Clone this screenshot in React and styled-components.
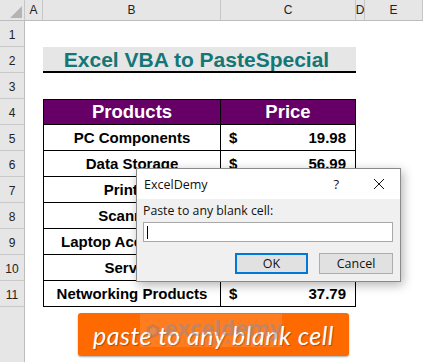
import React from 'react'
import styled, { createGlobalStyle } from 'styled-components'

const GlobalStyle = createGlobalStyle`
    html, body {
        margin: 0;
        padding: 0;
        background: #ffffff;
    }
    * {
        box-sizing: border-box;
    }
`;

const PRODUCTS = [
    { name: 'PC Components', price: '19.98' },
    { name: 'Data Storage', price: '56.99' },
    { name: 'Printers', price: '120.50' },
    { name: 'Scanners', price: '89.99' },
    { name: 'Laptop Accessories', price: '25.49' },
    { name: 'Servers', price: '899.00' },
    { name: 'Networking Products', price: '37.79' },
];

const COLUMNS = ['A', 'B', 'C', 'D', 'E'];

export default function App() {
    return (
        <>
            <GlobalStyle />
            <Sheet>
                <Corner>
                    <svg width="12" height="12" viewBox="0 0 12 12">
                        <polygon points="12,0 12,12 0,12" fill="#b4b4b4" />
                    </svg>
                </Corner>
                {COLUMNS.map((c) => (
                    <ColHead key={c}>{c}</ColHead>
                ))}

                {Array.from({ length: 11 }, (_, i) => (
                    <RowHead key={i} style={{ gridRow: i + 2 }}>{i + 1}</RowHead>
                ))}
                <RowHead $last style={{ gridRow: 13 }} />

                <Title>Excel VBA to PasteSpecial</Title>

                <HeadCell $col={3} $first>Products</HeadCell>
                <HeadCell $col={4}>Price</HeadCell>

                {PRODUCTS.map((p, i) => (
                    <React.Fragment key={p.name}>
                        <NameCell style={{ gridRow: i + 6 }}>{p.name}</NameCell>
                        <PriceCell style={{ gridRow: i + 6 }}>
                            <span>$</span>
                            <span>{p.price}</span>
                        </PriceCell>
                    </React.Fragment>
                ))}

                <ActionButton>
                    paste to any blank cell
                    <Watermark>
                        <svg width="22" height="24" viewBox="0 0 22 24">
                            <polygon points="11,1 21,6.5 21,17.5 11,23 1,17.5 1,6.5" fill="rgba(120,120,140,0.35)" />
                            <polygon points="11,6 16,9 16,15 11,18 6,15 6,9" fill="rgba(255,150,80,0.5)" />
                        </svg>
                        <WatermarkText>
                            <b>exceldemy</b>
                            <small>EXCEL · DATA · BI</small>
                        </WatermarkText>
                    </Watermark>
                </ActionButton>

                <Dialog>
                    <DialogTitle>
                        <span>ExcelDemy</span>
                        <TitleTools>
                            <span>?</span>
                            <svg width="12" height="12" viewBox="0 0 12 12">
                                <path d="M1 1 L11 11 M11 1 L1 11" stroke="#111" strokeWidth="1" />
                            </svg>
                        </TitleTools>
                    </DialogTitle>
                    <DialogBody>
                        <Label>Paste to any blank cell:</Label>
                        <Input>
                            <Caret />
                        </Input>
                        <Buttons>
                            <DialogButton $primary>OK</DialogButton>
                            <DialogButton>Cancel</DialogButton>
                        </Buttons>
                    </DialogBody>
                </Dialog>
            </Sheet>
        </>
    )
}

const Sheet = styled.div`
    position: relative;
    width: 423px;
    height: 362px;
    display: grid;
    grid-template-columns: 25px 18px 178px 135px 9px 1fr;
    grid-template-rows: 21px repeat(11, 26px) 1fr;
    font-family: "Liberation Sans", Arial, sans-serif;
    overflow: hidden;
`;

const Corner = styled.div`
    grid-row: 1;
    grid-column: 1;
    background: #e6e6e6;
    border-right: 1px solid #c6c6c6;
    border-bottom: 1px solid #bdbdbd;
    display: flex;
    align-items: flex-end;
    justify-content: flex-end;
    padding: 0 2px 2px 0;
`;

const ColHead = styled.div`
    grid-row: 1;
    background: #e6e6e6;
    border-right: 1px solid #c6c6c6;
    border-bottom: 1px solid #bdbdbd;
    display: flex;
    align-items: center;
    justify-content: center;
    font-size: 12px;
    color: #222;
    &:last-of-type {
        border-right: none;
    }
`;

const RowHead = styled.div`
    grid-column: 1;
    background: #e6e6e6;
    border-right: 1px solid #bdbdbd;
    border-bottom: ${(p) => (p.$last ? 'none' : '1px solid #c9c9c9')};
    display: flex;
    align-items: center;
    justify-content: center;
    padding-top: 2px;
    font-size: 12px;
    color: #222;
`;

const Title = styled.div`
    grid-row: 3;
    grid-column: 3 / 5;
    background: #e7e6e6;
    border-bottom: 2px solid #000;
    display: flex;
    align-items: center;
    justify-content: center;
    padding: 1px 6px 0 0;
    font-size: 21px;
    font-weight: bold;
    color: #137777;
`;

const HeadCell = styled.div`
    grid-row: 5;
    grid-column: ${(p) => p.$col};
    background: #660066;
    border: 1px solid #000;
    border-left: ${(p) => (p.$first ? '1px solid #000' : 'none')};
    display: flex;
    align-items: center;
    justify-content: center;
    font-size: 18.5px;
    font-weight: bold;
    color: #ffffff;
`;

const NameCell = styled.div`
    grid-column: 3;
    border-left: 1px solid #000;
    border-right: 1px solid #000;
    border-bottom: 1px solid #000;
    display: flex;
    align-items: center;
    justify-content: center;
    font-size: 15px;
    font-weight: bold;
    color: #000;
`;

const PriceCell = styled.div`
    grid-column: 4;
    border-right: 1px solid #000;
    border-bottom: 1px solid #000;
    display: flex;
    align-items: center;
    justify-content: space-between;
    padding: 0 9px 0 8px;
    font-size: 15px;
    font-weight: bold;
    color: #000;
`;

const ActionButton = styled.div`
    position: relative;
    grid-row: 13;
    grid-column: 3 / 5;
    align-self: start;
    margin: 6px 7px 0 35px;
    height: 43px;
    background: #ff6a00;
    border-radius: 3px;
    box-shadow: 0 1px 2px rgba(0, 0, 0, 0.35);
    display: flex;
    align-items: center;
    justify-content: center;
    font-family: Lato, "Open Sans", sans-serif;
    font-style: italic;
    font-size: 25px;
    color: #ffffff;
    letter-spacing: 0.5px;
    text-shadow: 1px 1px 1px rgba(0, 0, 0, 0.3);
`;

const Watermark = styled.div`
    position: absolute;
    left: 62px;
    top: 1px;
    width: 142px;
    height: 33px;
    background: rgba(255, 255, 255, 0.12);
    display: flex;
    align-items: center;
    gap: 4px;
    padding-left: 6px;
    pointer-events: none;
`;

const WatermarkText = styled.div`
    display: flex;
    flex-direction: column;
    line-height: 1;
    font-family: "Open Sans", sans-serif;
    font-style: normal;
    text-shadow: none;
    color: rgba(150, 140, 150, 0.55);
    b {
        font-size: 22px;
        letter-spacing: 0;
    }
    small {
        font-size: 7px;
        letter-spacing: 2px;
    }
`;

const Dialog = styled.div`
    position: absolute;
    left: 136px;
    top: 168px;
    width: 265px;
    height: 114px;
    border: 1px solid #8a8a8a;
    background: #f0f0f0;
    box-shadow: 2px 3px 10px rgba(0, 0, 0, 0.3);
    display: flex;
    flex-direction: column;
    font-family: "Open Sans", "Noto Sans", sans-serif;
    color: #111;
`;

const DialogTitle = styled.div`
    height: 30px;
    background: #ffffff;
    display: flex;
    align-items: center;
    justify-content: space-between;
    padding: 0 15px 0 7px;
    font-size: 12.5px;
`;

const TitleTools = styled.div`
    display: flex;
    align-items: center;
    gap: 34px;
    span {
        font-size: 13px;
    }
`;

const DialogBody = styled.div`
    flex: 1;
    display: flex;
    flex-direction: column;
    padding: 3px 7px 0 6px;
`;

const Label = styled.div`
    font-size: 12.3px;
    line-height: 17px;
`;

const Input = styled.div`
    margin-top: 3px;
    height: 20px;
    background: #ffffff;
    border: 1px solid #a8a8a8;
    display: flex;
    align-items: center;
    padding-left: 3px;
`;

const Caret = styled.div`
    width: 1px;
    height: 13px;
    background: #000;
`;

const Buttons = styled.div`
    margin-top: 11px;
    display: flex;
    justify-content: flex-end;
    gap: 11px;
`;

const DialogButton = styled.div`
    width: ${(p) => (p.$primary ? '73px' : '74px')};
    height: 21px;
    background: #e1e1e1;
    border: ${(p) => (p.$primary ? '2px solid #0078d7' : '1px solid #adadad')};
    display: flex;
    align-items: center;
    justify-content: center;
    font-size: 12.5px;
`;
